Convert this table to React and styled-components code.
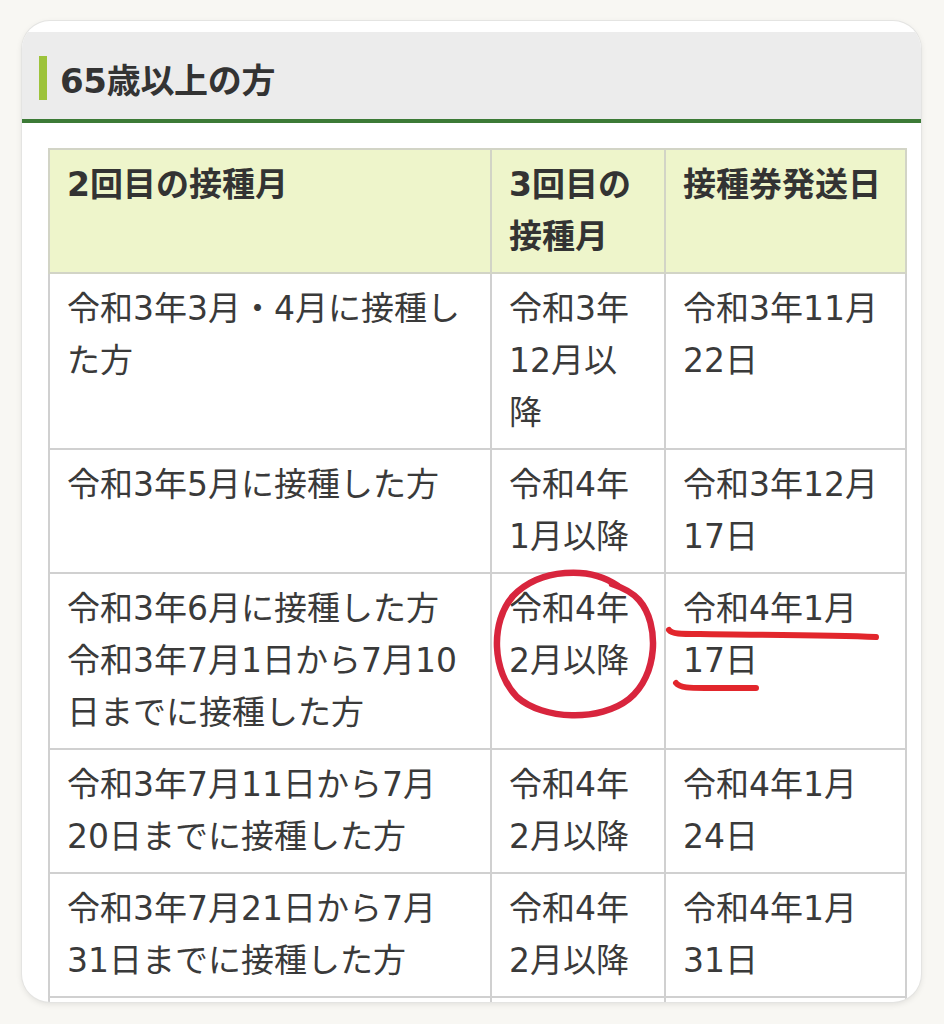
import styled, { createGlobalStyle } from 'styled-components'

const GlobalStyle = createGlobalStyle`
  html, body {
    margin: 0;
    padding: 0;
    background: #f8f7f3;
  }
  body {
    font-family: "DejaVu Sans", "Noto Sans CJK JP", sans-serif;
    color: #383838;
  }
`

const Page = styled.div`
  position: relative;
  box-sizing: border-box;
  width: 944px;
  height: 1024px;
  padding: 21px 23px 0 22px;
  overflow: hidden;
`

const Card = styled.section`
  box-sizing: border-box;
  height: 981px;
  padding-top: 11px;
  background: #fff;
  border-radius: 28px;
  overflow: hidden;
  box-shadow: 0 0 0 1px #e4e4e2, 0 2px 6px rgba(0, 0, 0, 0.1);
`

const Header = styled.header`
  display: flex;
  align-items: center;
  height: 87px;
  padding-left: 17px;
  background: #ececec;
  border-bottom: 4px solid #3c7a36;
`

const Accent = styled.span`
  width: 8px;
  height: 44px;
  margin-right: 13px;
  margin-top: 4px;
  background: #9dc33b;
`

const Title = styled.h2`
  margin: 6px 0 0;
  font-size: 34px;
  font-weight: 700;
  color: #333;
  letter-spacing: -0.3px;
`

const TableWrap = styled.div`
  padding: 25px 16px 0 26px;
`

const Table = styled.table`
  width: 857px;
  table-layout: fixed;
  border-collapse: collapse;
  font-size: 33px;
  line-height: 52px;
`

const HeadCell = styled.th`
  padding: 9px 12px 9px 17px;
  border: 2px solid #d2d4c6;
  background: #eef5cb;
  font-weight: 700;
  text-align: left;
  vertical-align: top;
  color: #333;
  white-space: nowrap;
`

const Cell = styled.td`
  padding: 9px 12px 9px 17px;
  height: ${(p) => (p.$empty ? '52px' : 'auto')};
  border: 2px solid #d0d0d0;
  vertical-align: top;
  white-space: nowrap;
  color: #3a3a3a;
`

const Line = styled.div`
  height: 52px;
`

const Marks = styled.svg`
  position: absolute;
  top: 0;
  left: 0;
  pointer-events: none;
`

const lines = (arr) => arr.map((t, i) => <Line key={i}>{t}</Line>)

const rows = [
  [['令和3年3月・4月に接種し', 'た方'], ['令和3年', '12月以', '降'], ['令和3年11月', '22日']],
  [['令和3年5月に接種した方'], ['令和4年', '1月以降'], ['令和3年12月', '17日']],
  [
    ['令和3年6月に接種した方', '令和3年7月1日から7月10', '日までに接種した方'],
    ['令和4年', '2月以降'],
    ['令和4年1月', '17日'],
  ],
  [['令和3年7月11日から7月', '20日までに接種した方'], ['令和4年', '2月以降'], ['令和4年1月', '24日']],
  [['令和3年7月21日から7月', '31日までに接種した方'], ['令和4年', '2月以降'], ['令和4年1月', '31日']],
]

export default function App() {
  return (
    <Page>
      <GlobalStyle />
      <Card>
        <Header>
          <Accent />
          <Title>65歳以上の方</Title>
        </Header>
        <TableWrap>
          <Table>
            <colgroup>
              <col style={{ width: 442 }} />
              <col style={{ width: 174 }} />
              <col style={{ width: 241 }} />
            </colgroup>
            <thead>
              <tr>
                <HeadCell>{lines(['2回目の接種月'])}</HeadCell>
                <HeadCell>{lines(['3回目の', '接種月'])}</HeadCell>
                <HeadCell>{lines(['接種券発送日'])}</HeadCell>
              </tr>
            </thead>
            <tbody>
              {rows.map((r, i) => (
                <tr key={i}>
                  {r.map((c, j) => (
                    <Cell key={j}>{lines(c)}</Cell>
                  ))}
                </tr>
              ))}
              <tr>
                <Cell $empty />
                <Cell $empty />
                <Cell $empty />
              </tr>
            </tbody>
          </Table>
        </TableWrap>
      </Card>
      <Marks width="944" height="1024" viewBox="0 0 944 1024">
        <g fill="none" stroke="#d8253d" strokeWidth="6.5" strokeLinecap="round">
          <path d="M 618 586 C 590 566 540 568 513 596 C 490 622 492 672 517 697 C 543 720 600 722 629 699 C 658 676 660 624 639 600 C 632 592 624 588 612 584" />
        </g>
        <g fill="none" stroke="#e2262c" strokeWidth="6" strokeLinecap="round">
          <path d="M 669 630 C 672 634 680 634 700 634 C 760 635 830 635 876 637" />
          <path d="M 676 683 C 680 688 690 688 705 688 C 725 688 745 688 756 688" />
        </g>
      </Marks>
    </Page>
  )
}
